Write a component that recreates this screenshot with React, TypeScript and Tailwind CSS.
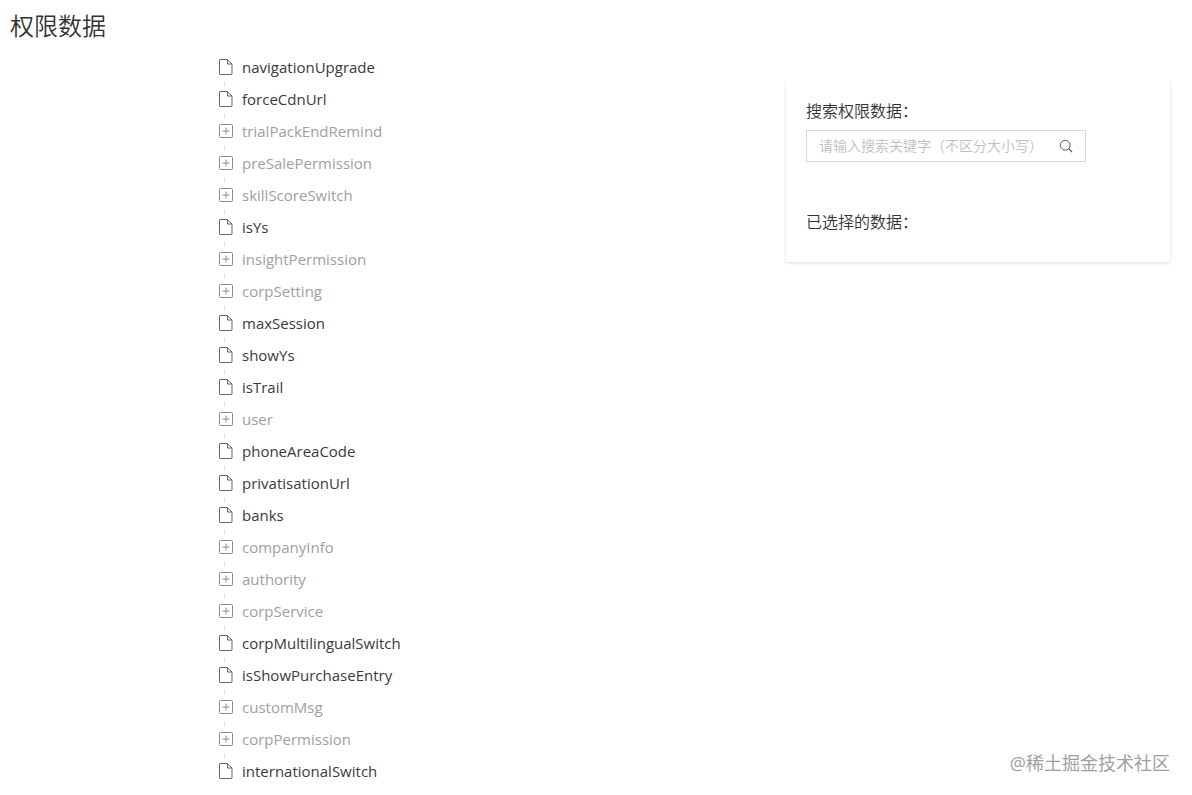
import React, { useState } from "react";

interface PermissionNode {
  name: string;
  hasChildren?: boolean;
}

const permissions: PermissionNode[] = [
  { name: "navigationUpgrade" },
  { name: "forceCdnUrl" },
  { name: "trialPackEndRemind", hasChildren: true },
  { name: "preSalePermission", hasChildren: true },
  { name: "skillScoreSwitch", hasChildren: true },
  { name: "isYs" },
  { name: "insightPermission", hasChildren: true },
  { name: "corpSetting", hasChildren: true },
  { name: "maxSession" },
  { name: "showYs" },
  { name: "isTrail" },
  { name: "user", hasChildren: true },
  { name: "phoneAreaCode" },
  { name: "privatisationUrl" },
  { name: "banks" },
  { name: "companyInfo", hasChildren: true },
  { name: "authority", hasChildren: true },
  { name: "corpService", hasChildren: true },
  { name: "corpMultilingualSwitch" },
  { name: "isShowPurchaseEntry" },
  { name: "customMsg", hasChildren: true },
  { name: "corpPermission", hasChildren: true },
  { name: "internationalSwitch" },
];

const FileIcon: React.FC = () => (
  <svg
    width="18"
    height="18"
    viewBox="0 0 18 18"
    fill="none"
    stroke="currentColor"
    strokeLinejoin="round"
    className="text-[#666666]"
  >
    <path d="M3 1.5h7.4l4.6 4.6v9.9a.5.5 0 0 1-.5.5H3a.5.5 0 0 1-.5-.5V2a.5.5 0 0 1 .5-.5z" />
    <path d="M10.5 1.8v4.2h4.2" />
  </svg>
);

const PlusSquareIcon: React.FC = () => (
  <svg
    width="18"
    height="18"
    viewBox="0 0 18 18"
    fill="none"
    stroke="currentColor"
  >
    <rect x="2.5" y="2.5" width="13" height="13" rx="1.2" />
    <path d="M9 5.5v7M5.5 9h7" />
  </svg>
);

const SearchIcon: React.FC = () => (
  <svg
    width="14"
    height="14"
    viewBox="0 0 14 14"
    fill="none"
    stroke="currentColor"
  >
    <circle cx="6.2" cy="6.2" r="4.9" />
    <path d="M9.7 9.7l3.3 3.3" strokeWidth="1.2" />
  </svg>
);

const TreeRow: React.FC<{ node: PermissionNode; last: boolean }> = ({
  node,
  last,
}) => (
  <li className="relative flex h-8 items-center gap-[7px]">
    {node.hasChildren ? (
      <button type="button" aria-label={node.name} className="text-[#8c8c8c]">
        <PlusSquareIcon />
      </button>
    ) : (
      <FileIcon />
    )}
    <span className={node.hasChildren ? "text-[#a0a0a0]" : "text-[#3a3a3a]"}>
      {node.name}
    </span>
    {/* Connector to the next row */}
    {!last && (
      <span className="absolute -bottom-1 left-[7px] h-1.5 w-px bg-[#e8e8e8]" />
    )}
  </li>
);

const App: React.FC = () => {
  const [keyword, setKeyword] = useState("");

  return (
    <div className="relative min-h-screen bg-white font-['Open_Sans','Noto_Sans_CJK_SC',sans-serif] text-[#333333]">
      <h1 className="px-2.5 pt-2 text-2xl leading-9 font-[350]">权限数据</h1>

      <div className="mt-[7px] flex items-start justify-between pr-[22px] pl-[217px]">
        <ul className="text-[15px] leading-8">
          {permissions.map((node, index) => (
            <TreeRow
              key={node.name}
              node={node}
              last={index === permissions.length - 1}
            />
          ))}
        </ul>

        <aside className="mt-[29px] w-96 px-5 pt-[19px] pb-7 font-[350] shadow-[0_1px_3px_rgba(0,0,0,0.14)] [clip-path:inset(0_-4px_-5px_-4px)]">
          <label htmlFor="keyword" className="block text-base leading-6">
            搜索权限数据：
          </label>
          <div className="mt-[7px] flex h-8 w-[280px] items-center border border-[#d9d9d9] px-3">
            <input
              id="keyword"
              type="text"
              value={keyword}
              onChange={(e) => setKeyword(e.target.value)}
              placeholder="请输入搜索关键字（不区分大小写）"
              className="min-w-0 flex-1 text-sm outline-none placeholder:text-[#bfbfbf]"
            />
            <button type="button" aria-label="搜索" className="text-[#595959]">
              <SearchIcon />
            </button>
          </div>
          <h2 className="mt-12 text-base leading-6 font-[350]">
            已选择的数据：
          </h2>
        </aside>
      </div>

      <div className="absolute right-[22px] bottom-5 text-lg leading-6 text-[#a0a0a0]">
        @稀土掘金技术社区
      </div>
    </div>
  );
};

export default App;
